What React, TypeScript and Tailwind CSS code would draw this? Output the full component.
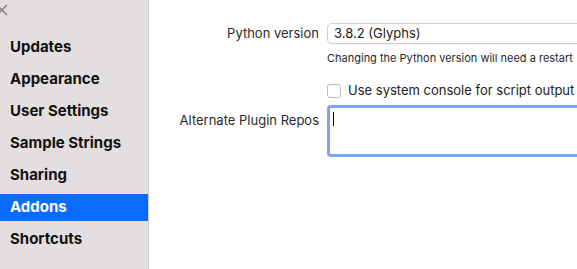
import React from "react";

const items = [
  "Updates",
  "Appearance",
  "User Settings",
  "Sample Strings",
  "Sharing",
  "Addons",
  "Shortcuts",
];

const font = { fontFamily: "Inter, 'Liberation Sans', sans-serif" };

export default function App() {
  return (
    <div
      className="flex h-[269px] w-[577px] overflow-hidden bg-white text-[#222]"
      style={font}
    >
      <aside className="flex w-[149px] shrink-0 flex-col border-r border-[#d3cfd0] bg-[#e3dfe0]">
        <div className="h-[34px] pt-[4px]">
          <svg width="12" height="12" viewBox="0 0 12 12" className="-ml-[4px]">
            <path d="M1 1 L11 11 M11 1 L1 11" stroke="#7b7b7b" strokeWidth="1.4" />
          </svg>
        </div>
        <ul className="flex flex-col gap-[5px]">
          {items.map((item) => (
            <li
              key={item}
              className={
                item === "Addons"
                  ? "flex h-[27px] items-center bg-[#0a6cff] pl-[10px] text-[15px] font-bold text-white"
                  : "flex h-[27px] items-center pl-[10px] text-[15px] font-bold text-[#111]"
              }
            >
              {item}
            </li>
          ))}
        </ul>
      </aside>

      <main className="flex flex-1 flex-col pt-[23px]">
        <div className="flex items-center">
          <div className="w-[178px] shrink-0 pr-[8px] text-right text-[13px] text-[#2a2a2a]">
            Python version
          </div>
          <div className="flex h-[21px] w-[300px] shrink-0 items-center rounded-[5px] border border-[#cfcfcf] bg-white pl-[6px] text-[13px] text-[#222] shadow-[0_1px_1px_rgba(0,0,0,0.06)]">
            3.8.2 (Glyphs)
          </div>
        </div>

        <div className="mt-[7px] flex">
          <div className="w-[178px] shrink-0" />
          <div className="whitespace-nowrap text-[11px] leading-[14px] text-[#2a2a2a]">
            Changing the Python version will need a restart
          </div>
        </div>

        <div className="mt-[16px] flex items-center">
          <div className="w-[178px] shrink-0" />
          <div className="h-[14px] w-[14px] shrink-0 rounded-[3px] border border-[#bdbdbd] bg-white" />
          <div className="ml-[7px] whitespace-nowrap text-[13px] text-[#222]">
            Use system console for script output
          </div>
        </div>

        <div className="mt-[4px] flex">
          <div className="w-[178px] shrink-0 pr-[8px] pt-[6px] text-right text-[13px] text-[#2a2a2a]">
            Alternate Plugin Repos
          </div>
          <div className="h-[52px] w-[300px] shrink-0 rounded-[4px] border-[3px] border-[#7ba5ef] bg-white pl-[3px] pt-[4px]">
            <div className="h-[14px] w-px bg-black" />
          </div>
        </div>
      </main>
    </div>
  );
}
